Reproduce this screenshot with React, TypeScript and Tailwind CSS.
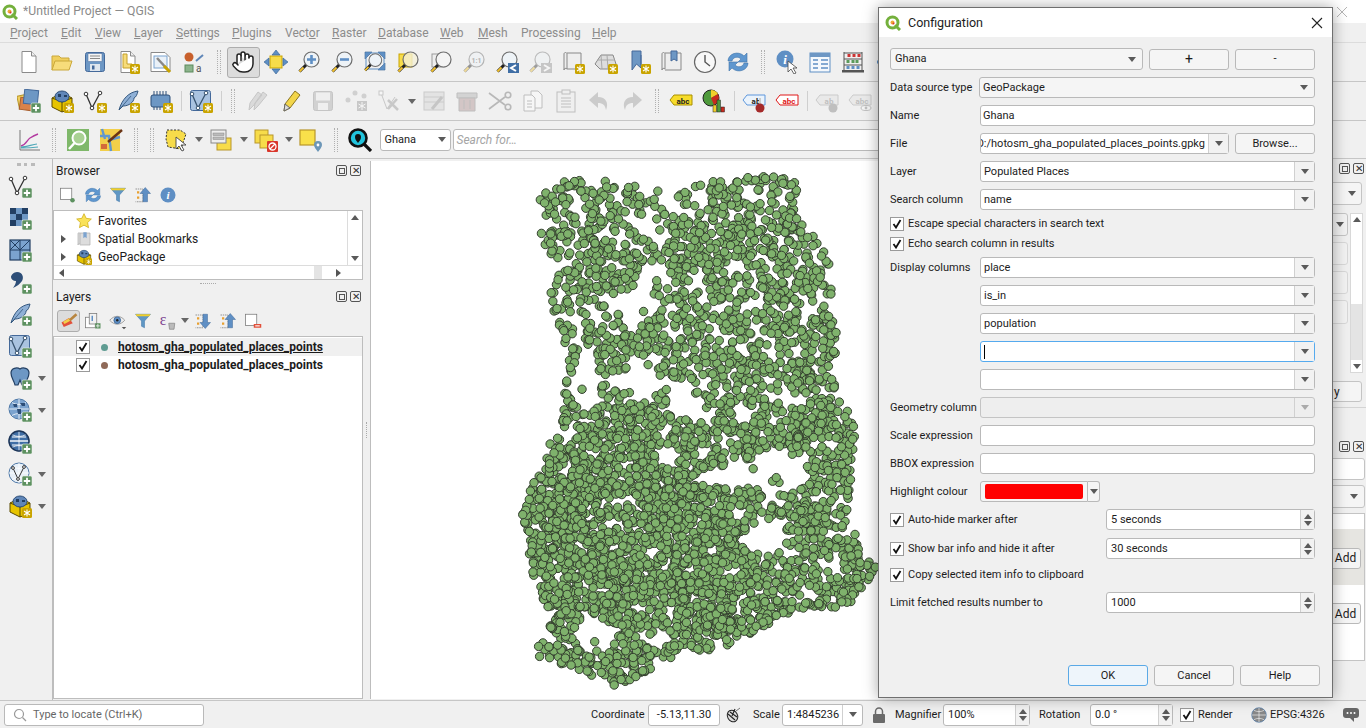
import { Hand } from "lucide-react";
import type { ReactNode } from "react";

//== helpers ==//
const Svg = ({ children, s = 24, className = "" }: { children: ReactNode; s?: number; className?: string }) => (
  <svg width={s} height={s} viewBox="0 0 24 24" className={className}>
    {children}
  </svg>
);

const Star = () => (
  <g>
    <rect x="14" y="14" width="10" height="10" rx="1.5" fill="#c9a400" />
    <path d="M19 15.5v7M16 17l6 4M22 17l-6 4" stroke="#fff" strokeWidth="1.1" />
  </g>
);

const PlusBadge = () => (
  <g>
    <rect x="14" y="14" width="10" height="10" rx="1.5" fill="#5d9160" stroke="#e8f0e8" strokeWidth=".6" />
    <path d="M19 15.8v6.4M15.8 19h6.4" stroke="#fff" strokeWidth="1.8" />
  </g>
);

const Glass = ({ fill = "#eef3f7", children }: { fill?: string; children?: ReactNode }) => (
  <>
    <circle cx="14.5" cy="9.5" r="7.5" fill={fill} stroke="#6e6e6e" strokeWidth="1.2" />
    {children}
    <path d="M9 15l-6.5 6.5" stroke="#222" strokeWidth="3" />
    <path d="M6.5 17.5l-4 4" stroke="#f2c230" strokeWidth="2" />
  </>
);

const DocIcon = ({ children }: { children?: ReactNode }) => (
  <>
    <path d="M5 1.5h9.5l4.5 4.5v16.5H5z" fill="#fff" stroke="#8a8a8a" />
    <path d="M14.5 1.5V6H19" fill="#eee" stroke="#8a8a8a" />
    {children}
  </>
);

const VShape = ({ c = "#333" }: { c?: string }) => (
  <>
    <path d="M3 5l6 14 8-15" fill="none" stroke={c} strokeWidth="1.3" />
    <circle cx="3" cy="5" r="1.8" fill="#fff" stroke={c} />
    <circle cx="9" cy="19" r="1.8" fill="#fff" stroke={c} />
    <circle cx="17" cy="4" r="1.8" fill="#fff" stroke={c} />
  </>
);

const Feather = () => (
  <>
    <path d="M3 21C6 10 13 3 22 2c-1 4-2 6-4 7 0 4-5 8-11 8z" fill="#8fb0d6" stroke="#35587f" />
    <path d="M3 21l12-14" stroke="#35587f" strokeWidth=".8" />
  </>
);

const GeoBox = () => (
  <>
    <path d="M12 4l10 5v10l-10 4-10-5V9z" fill="#e7c400" stroke="#5b4a00" />
    <path d="M2 9l10 4 10-4M12 13v10" fill="none" stroke="#5b4a00" />
    <ellipse cx="12" cy="7.5" rx="7" ry="5.5" fill="#5f86b8" stroke="#2d4e78" />
    <path d="M8 5h3v3H8zM14 6h3v2h-3z" fill="#223f63" />
  </>
);

const Globe = ({ c = "#7ba3cf" }: { c?: string }) => (
  <>
    <ellipse cx="11" cy="11" rx="10" ry="10" fill={c} stroke="#4f79a8" />
    <path d="M1 11h20M11 1v20M4 4.5c4 2.5 10 2.5 14 0M4 17.5c4-2.5 10-2.5 14 0" fill="none" stroke="#fff" strokeWidth=".8" />
  </>
);

const Tag = ({ c, fg = "#222", stroke, label }: { c: string; fg?: string; stroke: string; label: string }) => (
  <>
    <path d="M1 11l4-5h18v10H5z" fill={c} stroke={stroke} strokeWidth="1" />
    <text x="14" y="14.5" textAnchor="middle" fontSize="8" fontWeight="700" fontFamily="Roboto" fill={fg}>
      {label}
    </text>
  </>
);

//== toolbar row contents ==//
const i = {
  doc: <DocIcon />,
  folder: (
    <>
      <path d="M2 20V6h7l2 2h8v3" fill="#f0cf5e" stroke="#caa83a" />
      <path d="M2 20l3-9h17l-3 9z" fill="#f7dc7a" stroke="#caa83a" />
    </>
  ),
  save: (
    <>
      <rect x="2.5" y="2.5" width="19" height="19" rx="2" fill="#6d97c4" stroke="#44699a" />
      <rect x="5" y="3.5" width="14" height="8" fill="#f4f4f4" stroke="#44699a" strokeWidth=".5" />
      <path d="M7 6h10M7 8.5h10" stroke="#888" />
      <rect x="7" y="14" width="10" height="7" fill="#dfe6ee" />
      <rect x="9" y="15.5" width="2.5" height="4" fill="#44699a" />
    </>
  ),
  layout: (
    <>
      <DocIcon>
        <path d="M7 4h4v10h5v4H7z" fill="#f7dc7a" stroke="#c49f2a" />
      </DocIcon>
      <Star />
    </>
  ),
  layoutMgr: (
    <>
      <path d="M2 2.5h14l5 5v14H2z" fill="#fff" stroke="#8a8a8a" />
      <rect x="5" y="6" width="13" height="12" fill="#eaf1f8" stroke="#7ba3cf" />
      <path d="M8 8l12 13" stroke="#888" strokeWidth="2.5" />
      <path d="M15 16l6 6" stroke="#c9a400" strokeWidth="3" />
    </>
  ),
  style: (
    <>
      <circle cx="7" cy="7" r="4.5" fill="#c8602c" />
      <path d="M14 11l7-6" stroke="#5f86b8" strokeWidth="2" />
      <rect x="3" y="15" width="8" height="7" fill="#8cb48c" stroke="#5d8a5d" />
      <text x="14" y="22" fontSize="10" fontFamily="Roboto" fill="#555">a</text>
    </>
  ),
  pan: (
    <>
      <rect x="6" y="6" width="12" height="12" fill="#f7dc4a" stroke="#c9a400" />
      <path d="M12 0l4 5H8zM12 24l4-5H8zM0 12l5-4v8zM24 12l-5-4v8z" fill="#5f8fc4" stroke="#345f92" strokeWidth=".6" />
    </>
  ),
  zoomIn: (
    <Glass>
      <path d="M14.5 5v9M10 9.5h9" stroke="#5f8fc4" strokeWidth="2.6" />
    </Glass>
  ),
  zoomOut: (
    <Glass>
      <path d="M10 9.5h9" stroke="#5f8fc4" strokeWidth="2.6" />
    </Glass>
  ),
  zoomFull: (
    <>
      <path d="M2 2h7L2 9zM22 2h-7l7 7zM22 20h-7l7-7z" fill="#5f8fc4" stroke="#345f92" strokeWidth=".6" />
      <rect x="3" y="3" width="18" height="16" fill="none" stroke="#5f8fc4" />
      <g transform="translate(0 2) scale(.85)">
        <Glass />
      </g>
    </>
  ),
  zoomSel: (
    <>
      <rect x="3" y="4" width="13" height="13" fill="#f7dc4a" stroke="#c9a400" />
      <Glass fill="#f4f0d8cc" />
    </>
  ),
  zoomLayer: (
    <>
      <rect x="3" y="4" width="13" height="13" fill="#eee" stroke="#999" />
      <Glass fill="#f4f4f4" />
    </>
  ),
  zoomNative: (
    <g opacity=".45">
      <Glass>
        <text x="14.5" y="12.5" textAnchor="middle" fontSize="7" fontWeight="700" fontFamily="Roboto" fill="#666">1:1</text>
      </Glass>
    </g>
  ),
  zoomLast: (
    <>
      <Glass />
      <rect x="13" y="13" width="11" height="10" fill="#3f6ea5" />
      <path d="M21 15l-5 3 5 3" fill="none" stroke="#fff" strokeWidth="2" />
    </>
  ),
  zoomNext: (
    <g opacity=".4">
      <Glass />
      <rect x="13" y="13" width="11" height="10" fill="#888" />
      <path d="M16 15l5 3-5 3" fill="none" stroke="#fff" strokeWidth="2" />
    </g>
  ),
  mapView: (
    <>
      <path d="M3 4c0-2 3-2 3 0v15c-1-1-3-1-3 1zM6 3h14v16H6" fill="#eee" stroke="#888" />
      <Star />
    </>
  ),
  map3d: (
    <>
      <path d="M1 14l6-9h12l3 9-7 5H6z" fill="#ddd" stroke="#888" />
      <path d="M7 5l1 14M13 5l1 14M3 10h18" stroke="#aaa" fill="none" />
      <Star />
    </>
  ),
  bookmark: (
    <>
      <path d="M5 1h9v17l-4.5-4L5 20z" fill="#6d97c4" stroke="#44699a" />
      <path d="M14 5v10" stroke="#44699a" />
      <Star />
    </>
  ),
  showBook: (
    <>
      <path d="M2 4c0-2 3-2 3 0v15c-1-1-3-1-3 1zM5 3h16v17H5" fill="#eee" stroke="#888" />
      <path d="M11 1h6v10l-3-2-3 2z" fill="#6d97c4" stroke="#44699a" />
    </>
  ),
  clock: (
    <>
      <circle cx="12" cy="12" r="10.5" fill="#f8f8f8" stroke="#666" strokeWidth="1.2" />
      <path d="M12 5v7l5 4" fill="none" stroke="#555" strokeWidth="1.4" />
    </>
  ),
  refresh: (
    <>
      <path d="M2 11c0-7 10-11 16-5l3-3v9h-9l3-3c-3-3-8-2-9 2z" fill="#5f97cf" stroke="#3f74aa" strokeWidth=".6" />
      <path d="M22 13c0 7-10 11-16 5l-3 3v-9h9l-3 3c3 3 8 2 9-2z" fill="#5f97cf" stroke="#3f74aa" strokeWidth=".6" />
    </>
  ),
  identify: (
    <>
      <circle cx="10" cy="9" r="8.5" fill="#5f8fc4" />
      <text x="10" y="14" textAnchor="middle" fontSize="13" fontStyle="italic" fontWeight="700" fontFamily="Liberation Serif" fill="#fff">i</text>
      <path d="M13 11v11l3-3 3 5 2-1-3-5h4z" fill="#fff" stroke="#444" strokeWidth=".8" />
    </>
  ),
  attr: (
    <>
      <rect x="2" y="3" width="20" height="19" fill="#f4f8fc" stroke="#5f8fc4" />
      <rect x="2" y="3" width="20" height="4" fill="#6d97c4" />
      <path d="M5 10h5M13 10h7M5 14h5M13 14h7M5 18h5M13 18h7" stroke="#5f8fc4" strokeWidth="1.3" />
    </>
  ),
  abacus: (
    <>
      <path d="M3 2v19M21 2v19M3 3h18M3 9h18M3 15h18" stroke="#555" fill="none" />
      <rect x="1" y="20" width="22" height="2.5" fill="#555" />
      <path d="M8 4v3M13 4v3M18 4v3" stroke="#c33" strokeWidth="3" />
      <path d="M7 10v3M12 10v3M16 10v3" stroke="#5b9a5b" strokeWidth="3" />
      <path d="M7 16v3M12 16v3M17 16v3" stroke="#5f8fc4" strokeWidth="3" />
    </>
  ),
  arrows: <path d="M12 3v18M3 12h18" stroke="#5f8fc4" strokeWidth="3" />,
  dsm: (
    <>
      <rect x="1" y="6" width="13" height="13" fill="#f0cf5e" stroke="#b8962a" transform="rotate(-12 7 12)" />
      <rect x="3" y="9" width="13" height="12" fill="#d9824a" stroke="#a85f2e" transform="rotate(8 9 15)" />
      <rect x="7" y="1" width="14" height="14" fill="#6d97c4" stroke="#44699a" transform="rotate(6 14 8)" />
      <PlusBadge />
    </>
  ),
  geo: (
    <>
      <GeoBox />
      <Star />
    </>
  ),
  vertex: (
    <>
      <VShape />
      <Star />
    </>
  ),
  feather: (
    <>
      <Feather />
      <Star />
    </>
  ),
  chip: (
    <>
      <rect x="2" y="6" width="19" height="12" rx="2" fill="#6d97c4" stroke="#2d4e78" />
      <path d="M5 2v4M8 2v4M11 2v4M14 2v4M17 2v4M5 18v3M8 18v3M11 18v3" stroke="#2d4e78" />
      <Star />
    </>
  ),
  mesh: (
    <>
      <rect x="1.5" y="1.5" width="20" height="20" rx="2" fill="#a9c3e0" stroke="#44699a" />
      <VShape c="#39546f" />
      <Star />
    </>
  ),
  pencils: (
    <g opacity=".4">
      <path d="M4 21l1-7 8-11 4 3-9 11zM9 21l1-7 8-11 4 3-9 11z" fill="#bbb" stroke="#888" />
    </g>
  ),
  pencil: (
    <>
      <path d="M6 22l1-7L17 2l5 4-10 13z" fill="#f2d54a" stroke="#8a7420" />
      <path d="M6 22l1-7 5 4z" fill="#ddd" stroke="#666" />
    </>
  ),
  saveEdit: (
    <g opacity=".35">
      <rect x="2.5" y="2.5" width="19" height="19" rx="2" fill="#999" stroke="#777" />
      <rect x="5" y="3.5" width="14" height="8" fill="#eee" />
      <rect x="7" y="14" width="10" height="7" fill="#eee" />
    </g>
  ),
  nodes: (
    <g opacity=".45">
      <circle cx="11" cy="4" r="2.5" fill="#aaa" />
      <circle cx="4" cy="11" r="2.5" fill="#aaa" />
      <circle cx="20" cy="7" r="2.5" fill="#aaa" />
      <rect x="13" y="12" width="10" height="10" fill="#999" />
      <path d="M18 13v8M14.5 15l7 4M21.5 15l-7 4" stroke="#fff" />
    </g>
  ),
  vertexTool: (
    <g opacity=".45">
      <path d="M4 4l6 16 8-12" fill="none" stroke="#999" />
      <rect x="2" y="2" width="4" height="4" fill="#fff" stroke="#999" />
      <path d="M11 11l10 10M20 10l-9 10" stroke="#999" strokeWidth="2.5" />
    </g>
  ),
  merge: (
    <g opacity=".35">
      <rect x="2" y="3" width="20" height="18" fill="#ccc" stroke="#888" />
      <path d="M2 8h20M2 13h20" stroke="#888" />
      <path d="M10 20l10-12" stroke="#777" strokeWidth="3" />
    </g>
  ),
  trash: (
    <g opacity=".4">
      <path d="M2 4h20v5H2z" fill="#aaa" stroke="#777" />
      <path d="M4 9h16v13H4z" fill="#a88" stroke="#777" />
      <path d="M9 11v9M15 11v9" stroke="#777" />
    </g>
  ),
  scissors: (
    <g opacity=".4" fill="none" stroke="#666" strokeWidth="1.6">
      <path d="M1 4l16 12M1 20L17 8" />
      <circle cx="20" cy="6" r="2.8" />
      <circle cx="20" cy="18" r="2.8" />
    </g>
  ),
  copy: (
    <g opacity=".4" fill="#fff" stroke="#777">
      <path d="M10 2h7l4 4v13H10z" />
      <path d="M3 6h8l3 3v13H3zM6 12h5M6 15h5M6 18h5" />
    </g>
  ),
  paste: (
    <g opacity=".4" fill="#eee" stroke="#777">
      <rect x="3" y="3" width="18" height="20" />
      <rect x="8" y="1" width="8" height="4" />
      <path d="M7 9h10M7 12h10M7 15h10M7 18h10" />
    </g>
  ),
  undo: (
    <g opacity=".35">
      <path d="M11 3L2 11l9 8v-5c5 0 7 2 8 7 3-7 0-13-8-13z" fill="#888" />
    </g>
  ),
  redo: (
    <g opacity=".35">
      <path d="M13 3l9 8-9 8v-5c-5 0-7 2-8 7-3-7 0-13 8-13z" fill="#888" />
    </g>
  ),
  abcY: <Tag c="#f7dc2a" stroke="#a88f00" label="abc" />,
  pieBar: (
    <>
      <circle cx="9" cy="9" r="8" fill="#4f9a3c" stroke="#222" />
      <path d="M9 9V1a8 8 0 0 1 7 4z" fill="#f2cf2a" />
      <path d="M9 9l7-4a8 8 0 0 1-4 11z" fill="#c82a1e" />
      <rect x="11" y="16" width="3.5" height="7" fill="#f2cf2a" stroke="#222" strokeWidth=".5" />
      <rect x="15" y="11" width="3.5" height="12" fill="#4f9a3c" stroke="#222" strokeWidth=".5" />
      <rect x="19" y="18" width="3.5" height="5" fill="#c82a1e" stroke="#222" strokeWidth=".5" />
    </>
  ),
  abPin: (
    <>
      <Tag c="#eaf3fc" stroke="#5f97dc" label="ab" />
      <rect x="17" y="9" width="2" height="9" fill="#ccc" />
      <circle cx="18" cy="19" r="4.5" fill="#a52a2a" />
    </>
  ),
  abcR: <Tag c="#fff" fg="#e01818" stroke="#e01818" label="abc" />,
  abDim: (
    <g opacity=".35">
      <Tag c="#ddd" stroke="#888" fg="#666" label="ab" />
      <circle cx="18" cy="19" r="4.5" fill="#666" />
    </g>
  ),
  abcDim: (
    <g opacity=".35">
      <Tag c="#ddd" stroke="#888" fg="#666" label="abc" />
      <ellipse cx="18" cy="19" rx="5" ry="2.5" fill="#fff" stroke="#666" />
      <circle cx="18" cy="19" r="1.4" fill="#666" />
    </g>
  ),
  chart: (
    <>
      <path d="M3 2v20h20" fill="none" stroke="#777" />
      <path d="M4 18c5-1 6-6 9-8 3-2 5-3 8-4" fill="none" stroke="#b33aa0" strokeWidth="1.4" />
      <path d="M4 19c5 0 10-2 16-3M4 20c6 0 10 0 17-1" fill="none" stroke="#4fa8b8" strokeWidth="1.2" />
    </>
  ),
  find: (
    <>
      <rect x="1" y="1" width="22" height="22" fill="#7fb86a" />
      <circle cx="13" cy="10" r="6.5" fill="#a9d193" stroke="#fff" strokeWidth="2" />
      <path d="M8.5 15L3 21" stroke="#fff" strokeWidth="2.5" />
    </>
  ),
  mapBrush: (
    <>
      <rect x="1" y="1" width="20" height="22" fill="#f2cf4a" />
      <path d="M1 8h9l2 15M3 1l3 10M10 12l11-3" stroke="#5f97cf" strokeWidth="2.4" fill="none" />
      <path d="M2 16h6v5H2z" fill="#d46a3a" />
      <path d="M9 14L23 2" stroke="#6a3414" strokeWidth="2.5" />
    </>
  ),
  select: (
    <>
      <path d="M3 2h13l6 4-2 6-3 9-13-2-2-8z" fill="#f7dc4a" stroke="#333" strokeDasharray="2 1.5" />
      <path d="M12 9v12l3-3 3 5 2-1-3-5h5z" fill="#fff" stroke="#444" strokeWidth=".9" />
    </>
  ),
  table: (
    <>
      <rect x="8" y="10" width="14" height="12" fill="#f7dc4a" stroke="#b8962a" />
      <rect x="2" y="2" width="15" height="13" fill="#eee" stroke="#888" />
      <rect x="4" y="5" width="11" height="2.5" fill="#bbb" stroke="#888" strokeWidth=".5" />
      <rect x="4" y="9" width="11" height="2.5" fill="#bbb" stroke="#888" strokeWidth=".5" />
    </>
  ),
  deselect: (
    <>
      <rect x="1" y="2" width="13" height="13" fill="#f7dc4a" stroke="#b8962a" />
      <rect x="6" y="7" width="13" height="13" fill="#f7dc4a" stroke="#b8962a" />
      <rect x="13" y="13" width="11" height="11" rx="1" fill="#d9362a" />
      <circle cx="18.5" cy="18.5" r="3.5" fill="none" stroke="#fff" strokeWidth="1.3" />
      <path d="M16 21l5-5" stroke="#fff" strokeWidth="1.3" />
    </>
  ),
  pointer: (
    <>
      <rect x="1" y="2" width="15" height="15" fill="#f9e04a" stroke="#b8962a" strokeWidth="1.2" />
      <path d="M19 24c-2-3-4-5-4-7a4 4 0 0 1 8 0c0 2-2 4-4 7z" fill="#6d97b8" />
      <circle cx="19" cy="17" r="1.4" fill="#fff" />
    </>
  ),
  locator: (
    <>
      <circle cx="10" cy="10" r="8.5" fill="#22c3dc" stroke="#111" strokeWidth="2.6" />
      <path d="M16 16l7 7" stroke="#111" strokeWidth="3.2" />
      <path d="M10 15c-1-2-3-3-3-6a3 3 0 0 1 6 0c0 3-2 4-3 6z" fill="#111" />
    </>
  ),
  newShape: (
    <>
      <rect x="2" y="3" width="15" height="15" fill="#fff" stroke="#777" />
      <circle cx="18" cy="19" r="3" fill="#5d9160" />
    </>
  ),
  filter: (
    <>
      <path d="M2 3h20l-8 9v9l-4-2v-7z" fill="#5f97c4" stroke="#3f74aa" strokeWidth=".7" />
      <path d="M2 3h20l-1.5 2.5h-17z" fill="#f2cf2a" />
    </>
  ),
  collapse: (
    <>
      <path d="M2 4h10v17H2" fill="none" stroke="#777" strokeDasharray="2 1" />
      <rect x="4" y="7" width="3" height="3" fill="#e8a030" />
      <rect x="4" y="14" width="3" height="3" fill="#e8a030" />
      <path d="M15 2l7 8h-4v11h-6V10H8z" fill="#5f8fc4" stroke="#345f92" strokeWidth=".6" />
    </>
  ),
  expand: (
    <>
      <path d="M2 4h10v17H2" fill="none" stroke="#777" strokeDasharray="2 1" />
      <rect x="4" y="7" width="3" height="3" fill="#e8a030" />
      <rect x="4" y="14" width="3" height="3" fill="#e8a030" />
      <path d="M15 22l7-8h-4V3h-6v11H8z" fill="#5f8fc4" stroke="#345f92" strokeWidth=".6" />
    </>
  ),
  info: (
    <>
      <circle cx="12" cy="12" r="10" fill="#5f8fc4" />
      <text x="12" y="17.5" textAnchor="middle" fontSize="15" fontStyle="italic" fontWeight="700" fontFamily="Liberation Serif" fill="#fff">i</text>
    </>
  ),
  paint: (
    <>
      <path d="M2 14l10-6 5 7-12 5z" fill="#e2503a" />
      <path d="M4 13l9-5 2 3-9 5z" fill="#f2cf4a" />
      <path d="M13 11L22 3" stroke="#b88540" strokeWidth="3.5" />
    </>
  ),
  addGroup: (
    <>
      <rect x="2" y="7" width="13" height="14" fill="#fff" stroke="#777" />
      <rect x="7" y="2" width="10" height="14" fill="#f2f2f2" stroke="#777" />
      <path d="M11 5v7" stroke="#5f8fc4" strokeWidth="2" />
      <rect x="15" y="15" width="7" height="7" fill="#5d9160" />
      <path d="M18.5 16v5M16 18.5h5" stroke="#fff" />
    </>
  ),
  eye: (
    <>
      <path d="M1 11c6-7 14-7 20 0-6 7-14 7-20 0z" fill="#eee" stroke="#888" />
      <circle cx="11" cy="11" r="4.5" fill="#5f8fc4" stroke="#345f92" />
      <circle cx="11" cy="11" r="1.6" fill="#222" />
      <path d="M17 20l3 3 3-3z" fill="#555" />
    </>
  ),
  expr: (
    <>
      <text x="1" y="17" fontSize="21" fontFamily="Liberation Serif" fill="#7d3f8f">ε</text>
      <path d="M13 15h8l-1 8h-6z" fill="#bbb" stroke="#888" />
    </>
  ),
  removeLayer: (
    <>
      <rect x="2" y="3" width="15" height="15" fill="#fff" stroke="#777" />
      <rect x="13" y="16" width="10" height="5" fill="#e2503a" />
      <path d="M15 18.5h6" stroke="#fff" strokeWidth="1.5" />
    </>
  ),
  star: <path d="M12 1l3.3 7 7.7 1-5.6 5.3 1.4 7.7-6.8-3.7L5.200 22l1.400-7.700L1 9l7.700-1z" fill="#f9e25a" stroke="#c9a400" />,
  bookTree: (
    <>
      <path d="M3 4c0-2 3-2 3 0v16c-1-1-3-1-3 1zM6 3h15v18H6" fill="#ddd" stroke="#aaa" />
      <path d="M11 2h5v9l-2.500-2-2.500 2z" fill="#7ba3cf" />
    </>
  ),
  checker: (
    <>
      <path d="M2 2h6v6H2zM8 8h6v6H8zM14 2h6v6h-6zM2 14h6v6H2z" fill="#223f63" />
      <path d="M8 2h6v6H8zM2 8h6v6H2zM14 8h6v6h-6zM8 14h6v6H8z" fill="#6d97c4" />
      <PlusBadge />
    </>
  ),
  meshAdd: (
    <>
      <rect x="2" y="2" width="20" height="20" fill="#7ba3cf" stroke="#223f63" strokeWidth="1.2" />
      <path d="M2 2l10 10M12 2L2 12M12 2v20M2 12h20M22 2L12 12" stroke="#223f63" />
      <PlusBadge />
    </>
  ),
  comma: (
    <>
      <path d="M9 2c6 0 7 6 5 9-2 3-5 5-9 7 2-3 3-5 3-7-3 0-5-2-5-4s3-5 6-5z" fill="#2d4e78" />
      <PlusBadge />
    </>
  ),
  featherAdd: (
    <>
      <Feather />
      <PlusBadge />
    </>
  ),
  meshVAdd: (
    <>
      <rect x="1.500" y="1.500" width="20" height="20" rx="2" fill="#a9c3e0" stroke="#44699a" />
      <VShape c="#39546f" />
      <PlusBadge />
    </>
  ),
  vAdd: (
    <>
      <VShape />
      <PlusBadge />
    </>
  ),
  pg: (
    <>
      <path d="M3 7c0-5 6-6 9-4 3-2 9-1 9 4 0 5-3 7-4 12h-3l-2-5-2 5H7C6 14 3 12 3 7z" fill="#6d97c4" stroke="#223f63" strokeWidth="1.200" />
      <PlusBadge />
    </>
  ),
  wms: (
    <>
      <Globe />
      <path d="M5 6h4v3H6zM12 5h5v3h-3zM9 11h4v5h-3z" fill="#2d4e78" />
      <PlusBadge />
    </>
  ),
  wcs: (
    <>
      <Globe c="#3f6ea5" />
      <path d="M1 11h20M4 7h14M4 15h14" stroke="#fff" strokeWidth="1.200" />
      <circle cx="11" cy="11" r="10" fill="none" stroke="#1d3557" strokeWidth="1.500" />
      <PlusBadge />
    </>
  ),
  wfs: (
    <>
      <Globe c="#e8f0f8" />
      <path d="M5 6l5 11 6-12" fill="none" stroke="#333" />
      <circle cx="5" cy="6" r="1.400" fill="#fff" stroke="#333" />
      <circle cx="10" cy="17" r="1.400" fill="#fff" stroke="#333" />
      <circle cx="16" cy="5" r="1.400" fill="#fff" stroke="#333" />
      <PlusBadge />
    </>
  ),
};

const Caret = ({ c = "#5a5a5a" }: { c?: string }) => (
  <svg width="8" height="5" viewBox="0 0 8 5" className="shrink-0">
    <path d="M0 0h8L4 5z" fill={c} />
  </svg>
);

const Grip = ({ className = "" }: { className?: string }) => (
  <div className={`flex h-[24px] w-[16px] shrink-0 justify-center gap-[2px] ${className}`}>
    <div className="h-full w-px border-l border-dotted border-[#b0b0b0]" />
    <div className="h-full w-px border-l border-dotted border-[#b0b0b0]" />
  </div>
);

const Tool = ({ children, s = 24 }: { children: ReactNode; s?: number }) => (
  <div className="flex w-[33px] shrink-0 items-center justify-center">
    <Svg s={s}>{children}</Svg>
  </div>
);

const Drop = () => (
  <div className="flex w-[12px] shrink-0 items-center justify-center">
    <Caret c="#666" />
  </div>
);

const Sep = () => (
  <div className="flex w-[7px] shrink-0 justify-center">
    <div className="h-[20px] w-px bg-[#cfcfcf]" />
  </div>
);

const DockButtons = () => (
  <div className="flex items-center gap-[3px]">
    <div className="flex h-[11px] w-[11px] items-center justify-center rounded-[2px] border border-[#555]">
      <div className="h-[6px] w-[6px] border border-[#555]" />
    </div>
    <div className="flex h-[11px] w-[11px] items-center justify-center rounded-[2px] border border-[#555] text-[10px] leading-none text-[#333]">
      ✕
    </div>
  </div>
);

const QLogo = ({ s = 16 }: { s?: number }) => (
  <svg width={s} height={s} viewBox="0 0 16 16">
    <circle cx="7.500" cy="7.500" r="5.500" fill="#fff" stroke="#74b03c" strokeWidth="3" />
    <path d="M10 10l5 5" stroke="#74b03c" strokeWidth="3" />
    <circle cx="7.500" cy="7.500" r="2" fill="#f0a93a" />
    <circle cx="8.500" cy="8.500" r="1" fill="#d9362a" />
  </svg>
);

const CheckBox = () => (
  <div className="flex h-[14px] w-[14px] shrink-0 items-center justify-center border border-[#9a9a9a] bg-white">
    <svg width="10" height="10" viewBox="0 0 10 10">
      <path d="M1.500 5l2.500 3.500L8.500 1" fill="none" stroke="#111" strokeWidth="1.800" />
    </svg>
  </div>
);

//== Ghana points ==//
const POLY: [number, number][] = [
  [110, 110], [160, 55], [300, 50], [480, 85], [495, 160], [530, 100], [570, 60], [690, 50], [810, 30], [890, 50],
  [880, 150], [940, 210], [990, 260], [990, 420], [1010, 520], [1000, 640], [1060, 760], [1060, 850], [1040, 1030],
  [1085, 1140], [1135, 1190], [1090, 1240], [1040, 1300], [900, 1305], [800, 1350], [660, 1420], [480, 1460],
  [360, 1535], [200, 1470], [90, 1440], [150, 1320], [100, 1220], [75, 1100], [60, 1035], [110, 900], [185, 740],
  [195, 640], [190, 550], [160, 450], [145, 360], [200, 300], [125, 250], [110, 180],
];

const HOLES: [number, number, number, number][] = [
  [225, 135, 25, 18], [310, 140, 22, 22], [350, 225, 35, 22], [450, 180, 45, 50], [300, 320, 10, 8],
  [460, 320, 55, 32], [410, 420, 65, 55], [255, 650, 45, 80], [370, 640, 60, 30], [450, 650, 30, 60],
  [540, 690, 45, 60], [610, 640, 25, 20], [720, 730, 35, 30], [830, 900, 90, 70], [790, 1100, 75, 50],
  [500, 860, 35, 35], [280, 1385, 65, 55], [460, 1390, 45, 30], [880, 1270, 30, 12], [1000, 1190, 20, 15],
  [660, 920, 70, 30], [720, 905, 60, 40], [615, 850, 18, 20], [710, 370, 22, 18], [700, 290, 25, 14],
  [590, 340, 25, 25], [600, 730, 40, 30], [470, 570, 25, 12], [950, 790, 12, 22], [130, 1370, 15, 20],
];

const inPoly = (x: number, y: number) => {
  let inside = false;
  for (let a = 0, b = POLY.length - 1; a < POLY.length; b = a++) {
    const [xa, ya] = POLY[a];
    const [xb, yb] = POLY[b];
    if (ya > y !== yb > y && x < ((xb - xa) * (y - ya)) / (yb - ya) + xa) inside = !inside;
  }
  return inside;
};

const makeDots = () => {
  let seed = 20417;
  const rnd = () => {
    seed = (seed + 0x6d2b79f5) | 0;
    let t = Math.imul(seed ^ (seed >>> 15), 1 | seed);
    t = (t + Math.imul(t ^ (t >>> 7), 61 | t)) ^ t;
    return ((t ^ (t >>> 14)) >>> 0) / 4294967296;
  };
  const gaps: [number, number, number][] = [];
  for (let n = 0; n < 130; n++) gaps.push([60 + rnd() * 1040, 50 + rnd() * 1450, 6 + rnd() * 12]);
  const dots: [number, number][] = [];
  let tries = 0;
  while (dots.length < 4300 && tries < 300000) {
    tries++;
    const x = 55 + rnd() * 1085;
    const y = 28 + rnd() * 1510;
    if (!inPoly(x, y)) continue;
    if (HOLES.some(([cx, cy, rx, ry]) => ((x - cx) / rx) ** 2 + ((y - cy) / ry) ** 2 < 1) && rnd() > 0.06) continue;
    if (gaps.some(([cx, cy, r]) => (x - cx) ** 2 + (y - cy) ** 2 < r * r)) continue;
    const keep = y < 700 ? 0.55 : y > 850 && y < 1300 && x < 760 ? 1 : 0.72;
    if (rnd() > keep) continue;
    dots.push([x, y]);
  }
  for (const [cx, cy, k] of [[152, 1128, 8], [150, 1358, 10], [650, 1330, 50], [1002, 555, 5], [890, 800, 10]]) {
    for (let n = 0; n < k; n++) dots.push([cx + (rnd() - 0.5) * (k > 20 ? 90 : 8), cy + (rnd() - 0.5) * (k > 20 ? 70 : 8)]);
  }
  // 크롭 좌표 -> 지도 좌표 (세로는 조금 더 늘어남)
  return dots.map(([x, y]) => [500 + x / 3 - 370, 172 + ((y - 28) / 3) * 1.027 - 161]);
};
const DOTS = makeDots();

//== menu ==//
const MENU = [
  { pre: "", key: "P", post: "roject", w: "w-[51px]" },
  { pre: "", key: "E", post: "dit", w: "w-[34px]" },
  { pre: "", key: "V", post: "iew", w: "w-[39px]" },
  { pre: "", key: "L", post: "ayer", w: "w-[42px]" },
  { pre: "", key: "S", post: "ettings", w: "w-[56px]" },
  { pre: "", key: "P", post: "lugins", w: "w-[53px]" },
  { pre: "Vect", key: "o", post: "r", w: "w-[47px]" },
  { pre: "", key: "R", post: "aster", w: "w-[46px]" },
  { pre: "", key: "D", post: "atabase", w: "w-[62px]" },
  { pre: "", key: "W", post: "eb", w: "w-[38px]" },
  { pre: "", key: "M", post: "esh", w: "w-[43px]" },
  { pre: "Pro", key: "c", post: "essing", w: "w-[71px]" },
  { pre: "", key: "H", post: "elp", w: "w-[40px]" },
];

//== dialog controls ==//
const Combo = ({ value, className = "" }: { value?: ReactNode; className?: string }) => (
  <div className={`flex h-[21px] items-center rounded-[3px] border border-[#b9b9b9] bg-white ${className}`}>
    <div className="min-w-0 flex-1 truncate pl-[3px]">{value}</div>
    <div className="flex h-full w-[20px] items-center justify-center border-l border-[#d0d0d0] bg-[#f2f2f2]">
      <Caret />
    </div>
  </div>
);

const Button = ({ children, className = "" }: { children: ReactNode; className?: string }) => (
  <div className={`flex h-[21px] items-center justify-center rounded-[3px] border border-[#b9b9b9] bg-[#f5f5f5] ${className}`}>
    {children}
  </div>
);

const Input = ({ children }: { children?: ReactNode }) => (
  <div className="flex h-[21px] w-[335px] items-center rounded-[3px] border border-[#b9b9b9] bg-white pl-[2px]">{children}</div>
);

const Spin = ({ value, className = "" }: { value: string; className?: string }) => (
  <div className={`flex h-[21px] items-center rounded-[3px] border border-[#b9b9b9] bg-white ${className}`}>
    <div className="flex-1 truncate pl-[4px]">{value}</div>
    <div className="flex h-full w-[14px] flex-col items-center justify-center gap-[2px] border-l border-[#d0d0d0] bg-[#f2f2f2]">
      <svg width="8" height="5" viewBox="0 0 8 5">
        <path d="M0 5h8L4 0z" fill="#5a5a5a" />
      </svg>
      <Caret />
    </div>
  </div>
);

const Row = ({ label, children, mt = "mt-[7px]" }: { label: string; children: ReactNode; mt?: string }) => (
  <div className={`flex h-[21px] items-center ${mt}`}>
    <div className="w-[90px] shrink-0 whitespace-nowrap">{label}</div>
    {children}
  </div>
);

const Check = ({ label, mt }: { label: string; mt: string }) => (
  <div className={`flex h-[14px] items-center gap-[4px] ${mt}`}>
    <CheckBox />
    <span className="whitespace-nowrap">{label}</span>
  </div>
);

const Dialog = () => (
  <div className="absolute left-[878px] top-[7px] flex h-[691px] w-[455px] flex-col border border-[#6f6f6f] bg-[#f0f0f0] text-[11px] leading-[18px] text-[#1c1c1c] shadow-[0_0_14px_rgba(0,0,0,0.35)]">
    <div className="flex h-[29px] shrink-0 items-center bg-white pl-[6px] pr-[9px]">
      <QLogo />
      <span className="ml-[7px] flex-1 text-[12.500px]">Configuration</span>
      <svg width="12" height="12" viewBox="0 0 12 12">
        <path d="M1 1l10 10M11 1L1 11" stroke="#222" strokeWidth="1.100" />
      </svg>
    </div>
    <div className="flex flex-1 flex-col pl-[11px] pr-[17px]">
      <div className="mt-[11px] flex h-[22px] items-center">
        <div className="flex h-full w-[253px] items-center justify-between rounded-[3px] border border-[#b9b9b9] bg-[#f5f5f5] pl-[4px] pr-[6px]">
          Ghana
          <Caret />
        </div>
        <Button className="ml-[6px] w-[80px] text-[14px]">+</Button>
        <Button className="ml-[6px] w-[80px]">-</Button>
      </div>
      <Row label="Data source type">
        <div className="-ml-px flex h-full w-[336px] items-center justify-between rounded-[3px] border border-[#b9b9b9] bg-[#f5f5f5] pl-[3px] pr-[6px]">
          GeoPackage
          <Caret />
        </div>
      </Row>
      <Row label="Name">
        <Input>Ghana</Input>
      </Row>
      <Row label="File">
        <div className="flex h-[21px] w-[249px] items-center rounded-[3px] border border-[#b9b9b9] bg-white">
          <div className="flex min-w-0 flex-1 justify-end overflow-hidden whitespace-nowrap pr-[3px]">
            D:/hotosm_gha_populated_places_points.gpkg
          </div>
          <div className="flex h-full w-[20px] shrink-0 items-center justify-center border-l border-[#d0d0d0] bg-[#f2f2f2]">
            <Caret />
          </div>
        </div>
        <Button className="ml-[6px] w-[80px]">Browse...</Button>
      </Row>
      <Row label="Layer">
        <Combo value="Populated Places" className="w-[335px]" />
      </Row>
      <Row label="Search column">
        <Combo value="name" className="w-[335px]" />
      </Row>
      <Check label="Escape special characters in search text" mt="mt-[7px]" />
      <Check label="Echo search column in results" mt="mt-[6px]" />
      <Row label="Display columns" mt="mt-[6px]">
        <Combo value="place" className="w-[335px]" />
      </Row>
      <Row label="">
        <Combo value="is_in" className="w-[335px]" />
      </Row>
      <Row label="">
        <Combo value="population" className="w-[335px]" />
      </Row>
      <Row label="">
        <Combo value={<div className="h-[14px] w-px bg-black" />} className="w-[335px] !border-[#55aaee]" />
      </Row>
      <Row label="">
        <Combo className="w-[335px]" />
      </Row>
      <Row label="Geometry column">
        <div className="flex h-full w-[335px] items-center justify-end rounded-[3px] border border-[#c4c4c4] bg-[#eeeeee]">
          <div className="flex h-full w-[20px] items-center justify-center border-l border-[#d0d0d0]">
            <Caret c="#aaa" />
          </div>
        </div>
      </Row>
      <Row label="Scale expression">
        <Input />
      </Row>
      <Row label="BBOX expression">
        <Input />
      </Row>
      <Row label="Highlight colour">
        <div className="flex h-full w-[108px] items-center justify-center rounded-l-[3px] border border-[#b9b9b9] bg-[#f5f5f5]">
          <div className="h-[15px] w-[98px] rounded-[2px] bg-[#ff0000]" />
        </div>
        <div className="flex h-full w-[12px] items-center justify-center rounded-r-[3px] border border-l-0 border-[#b9b9b9] bg-[#f5f5f5]">
          <Caret />
        </div>
      </Row>
      <div className="mt-[7px] flex h-[21px] items-center justify-between">
        <Check label="Auto-hide marker after" mt="" />
        <Spin value="5 seconds" className="w-[209px]" />
      </div>
      <div className="mt-[8px] flex h-[21px] items-center justify-between">
        <Check label="Show bar info and hide it after" mt="" />
        <Spin value="30 seconds" className="w-[209px]" />
      </div>
      <Check label="Copy selected item info to clipboard" mt="mt-[9px]" />
      <div className="mt-[10px] flex h-[21px] items-center justify-between">
        <span className="whitespace-nowrap">Limit fetched results number to</span>
        <Spin value="1000" className="w-[209px]" />
      </div>
      <div className="-mr-[5px] mb-[11px] mt-auto flex justify-end gap-[6px]">
        <Button className="w-[80px] !border-[#5aa9e6] !bg-[#eef5fb]">OK</Button>
        <Button className="w-[80px]">Cancel</Button>
        <Button className="w-[80px]">Help</Button>
      </div>
    </div>
  </div>
);

//== behind the dialog on the right ==//
const RightDock = () => (
  <div className="flex h-full w-[33px] shrink-0 flex-col overflow-hidden text-[12px]">
    <div className="mt-[4px] flex h-[11px] justify-end pr-[2px]">
      <DockButtons />
    </div>
    <div className="ml-[-10px] mr-[4px] mt-[8px] flex h-[23px] items-center justify-end rounded-[3px] border border-[#c4c4c4] bg-[#f5f5f5] pr-[5px]">
      <Caret />
    </div>
    <div className="mt-[8px] flex h-[160px] gap-[2px] pr-[3px]">
      <div className="-ml-[10px] flex flex-1 flex-col gap-[6px]">
        <div className="flex h-[23px] shrink-0 items-center justify-end rounded-[3px] border border-[#c4c4c4] bg-[#f2f2f2] pr-[3px]">
          <Caret />
        </div>
        <div className="h-[23px] shrink-0 rounded-[3px] border border-[#d8d8d8] bg-[#f2f2f2]" />
        <div className="h-[23px] shrink-0 rounded-[3px] border border-[#d8d8d8] bg-[#f2f2f2]" />
        <div className="h-[24px] shrink-0 rounded-[3px] border border-[#d8d8d8] bg-[#f2f2f2]" />
      </div>
      <div className="flex w-[13px] flex-col items-center border border-[#d8d8d8] bg-white">
        <div className="flex h-[12px] items-center">
          <svg width="8" height="5" viewBox="0 0 8 5">
            <path d="M0 5h8L4 0z" fill="#5a5a5a" />
          </svg>
        </div>
        <div className="mt-[78px] h-[57px] w-full bg-[#e4e4e4]" />
        <div className="flex h-[12px] items-center">
          <Caret />
        </div>
      </div>
    </div>
    <div className="ml-[-10px] mr-[4px] mt-[8px] flex h-[21px] items-center justify-start rounded-[3px] border border-[#c4c4c4] bg-[#f5f5f5] pl-[10px]">
      y
    </div>
    <div className="mt-[5px] h-px bg-[#d4d4d4]" />
    <div className="mt-[33px] flex h-[11px] justify-end pr-[2px]">
      <DockButtons />
    </div>
    <div className="ml-[-10px] mr-[1px] mt-[6px] h-[22px] shrink-0 rounded-[3px] border border-[#c4c4c4] bg-white" />
    <div className="ml-[-10px] mr-[1px] mt-[5px] flex h-[23px] shrink-0 items-center justify-end rounded-[3px] border border-[#c4c4c4] bg-[#f5f5f5] pr-[6px]">
      <Caret />
    </div>
    <div className="mr-[1px] mt-[5px] flex h-[148px] shrink-0 flex-col border-y border-r border-[#c4c4c4] bg-white">
      <div className="mt-[15px] flex h-[56px] items-center bg-[#e6e5e1] pt-[2px]">
        <div className="-ml-[3px] flex h-[21px] w-[31px] items-center justify-center rounded-[3px] border border-[#b9b9b9] bg-[#f5f5f5]">
          Add
        </div>
      </div>
      <div className="mt-[18px] flex h-[21px]">
        <div className="-ml-[3px] flex h-[21px] w-[31px] items-center justify-center rounded-[3px] border border-[#b9b9b9] bg-[#f5f5f5]">
          Add
        </div>
      </div>
    </div>
  </div>
);

const App = () => {
  return (
    <div className="relative flex h-[728px] w-[1366px] flex-col overflow-hidden bg-[#f0f0f0] text-[12px] text-[#1c1c1c] [font-family:Roboto,sans-serif]">
      {/* title */}
      <div className="flex h-[23px] shrink-0 items-center bg-white pl-[2px] pr-[19px] text-[12.200px] text-[#8a8a8a]">
        <QLogo />
        <span className="ml-[5px] flex-1">*Untitled Project — QGIS</span>
        <svg width="10" height="10" viewBox="0 0 10 10">
          <path d="M0 0l10 10M10 0L0 10" stroke="#b5b5b5" />
        </svg>
      </div>

      {/* menu */}
      <div className="flex h-[20px] shrink-0 items-center border-b border-[#dcdcdc] pl-[10px] text-[#8c8c8c]">
        {MENU.map((m) => (
          <span key={m.pre + m.key + m.post} className={`${m.w} shrink-0`}>
            {m.pre}
            <span className="underline">{m.key}</span>
            {m.post}
          </span>
        ))}
      </div>

      {/* toolbars */}
      <div className="flex h-[39px] shrink-0 items-center border-b border-[#c6c6c6] pl-[12.500px]">
        {[i.doc, i.folder, i.save, i.layout, i.layoutMgr, i.style].map((n, k) => (
          <Tool key={k}>{n}</Tool>
        ))}
        <Grip />
        <div className="flex h-[31px] w-[33px] shrink-0 items-center justify-center rounded-[3px] border border-[#adadad] bg-[#dcdcdc]">
          <Hand size={24} fill="#fff" stroke="#222" strokeWidth={1.5} />
        </div>
        {[i.pan, i.zoomIn, i.zoomOut, i.zoomFull, i.zoomSel, i.zoomLayer, i.zoomNative, i.zoomLast, i.zoomNext, i.mapView, i.map3d, i.bookmark, i.showBook, i.clock, i.refresh].map((n, k) => (
          <Tool key={k}>{n}</Tool>
        ))}
        <Grip />
        {[i.identify, i.attr, i.abacus, i.arrows].map((n, k) => (
          <Tool key={k}>{n}</Tool>
        ))}
      </div>

      <div className="flex h-[39px] shrink-0 items-center border-b border-[#c6c6c6] pl-[12.500px]">
        {[i.dsm, i.geo, i.vertex, i.feather, i.chip].map((n, k) => (
          <Tool key={k}>{n}</Tool>
        ))}
        <Sep />
        <Tool>{i.mesh}</Tool>
        <Sep />
        <Grip />
        {[i.pencils, i.pencil, i.saveEdit, i.nodes, i.vertexTool].map((n, k) => (
          <Tool key={k}>{n}</Tool>
        ))}
        <Drop />
        {[i.merge, i.trash, i.scissors, i.copy, i.paste, i.undo, i.redo].map((n, k) => (
          <Tool key={k}>{n}</Tool>
        ))}
        <Grip />
        <Tool>{i.abcY}</Tool>
        <Tool>{i.pieBar}</Tool>
        <Sep />
        <Tool>{i.abPin}</Tool>
        <Tool>{i.abcR}</Tool>
        <Sep />
        <Tool>{i.abDim}</Tool>
        <Tool>{i.abcDim}</Tool>
      </div>

      <div className="flex h-[38px] shrink-0 items-center border-b border-[#c6c6c6] pl-[12.500px] pr-[40px]">
        <Tool>{i.chart}</Tool>
        <Grip />
        <Tool>{i.find}</Tool>
        <Tool>{i.mapBrush}</Tool>
        <Grip />
        <Grip />
        <Tool>{i.select}</Tool>
        <Drop />
        <Tool>{i.table}</Tool>
        <Drop />
        <Tool>{i.deselect}</Tool>
        <Drop />
        <Tool>{i.pointer}</Tool>
        <Grip />
        <Tool>{i.locator}</Tool>
        <div className="ml-[3px] flex h-[22px] w-[71px] shrink-0 items-center justify-between rounded-[3px] border border-[#b9b9b9] bg-white pl-[4px] pr-[4px] text-[11px] leading-[18px]">
          Ghana
          <Caret />
        </div>
        <div className="ml-[2px] flex h-[22px] flex-1 items-center rounded-[3px] border border-[#b9b9b9] bg-white pl-[3px] italic text-[#a5a5a5]">
          Search for…
        </div>
      </div>

      {/* body */}
      <div className="flex min-h-0 flex-1">
        <div className="flex w-[53px] shrink-0 flex-col border-r border-[#bdbdbd]">
          <div className="mx-auto h-[11px] w-[18px] pt-[4px]">
            <div className="border-t-[3px] border-dotted border-[#bbb]" />
          </div>
          {[
            [i.vAdd, false], [i.checker, false], [i.meshAdd, false], [i.comma, false], [i.featherAdd, false], [i.meshVAdd, false],
            [i.pg, true], [i.wms, true], [i.wcs, false], [i.wfs, true], [i.geo, true],
          ].map(([n, drop], k) => (
            <div key={k} className="flex h-[32px] shrink-0 items-center pl-[8px]">
              <Svg>{n as ReactNode}</Svg>
              {drop ? (
                <div className="ml-[6px]">
                  <Caret c="#666" />
                </div>
              ) : null}
            </div>
          ))}
        </div>

        <div className="flex w-[310px] shrink-0 flex-col pb-px pt-[2px]">
          <div className="flex h-[19px] shrink-0 items-center justify-between pl-[3px] pr-[2px]">
            Browser
            <DockButtons />
          </div>
          <div className="flex h-[29px] shrink-0 items-center pl-[2px]">
            {[i.newShape, i.refresh, i.filter, i.collapse, i.info].map((n, k) => (
              <div key={k} className="flex w-[25px] justify-center">
                <Svg s={18}>{n}</Svg>
              </div>
            ))}
          </div>
          <div className="mt-px flex h-[70px] shrink-0 flex-col border border-[#bdbdbd] bg-white">
            <div className="flex min-h-0 flex-1">
              <div className="flex-1 pt-px">
                {[
                  { n: i.star, t: "Favorites", a: false },
                  { n: i.bookTree, t: "Spatial Bookmarks", a: true },
                  { n: i.geo, t: "GeoPackage", a: true },
                ].map((r) => (
                  <div key={r.t} className="flex h-[18px] items-center">
                    <div className="flex w-[22px] justify-start pl-[7px]">
                      {r.a ? (
                        <svg width="5" height="8" viewBox="0 0 5 8">
                          <path d="M0 0l5 4-5 4z" fill="#555" />
                        </svg>
                      ) : null}
                    </div>
                    <Svg s={16}>{r.n}</Svg>
                    <span className="ml-[6px]">{r.t}</span>
                  </div>
                ))}
              </div>
              <div className="flex w-[15px] flex-col items-center justify-between border-l border-[#dcdcdc] py-[4px]">
                <svg width="8" height="5" viewBox="0 0 8 5">
                  <path d="M0 5h8L4 0z" fill="#5a5a5a" />
                </svg>
                <Caret />
              </div>
            </div>
            <div className="flex h-[14px] shrink-0 items-center justify-between border-t border-[#dcdcdc] px-[5px]">
              <svg width="5" height="8" viewBox="0 0 5 8">
                <path d="M5 0L0 4l5 4z" fill="#555" />
              </svg>
              <div className="ml-auto mr-[14px] h-[13px] w-[8px] bg-[#e4e4e4]" />
              <svg width="5" height="8" viewBox="0 0 5 8" className="mr-[16px]">
                <path d="M0 0l5 4-5 4z" fill="#555" />
              </svg>
            </div>
          </div>
          <div className="flex h-[7px] shrink-0 items-center justify-center">
            <div className="w-[16px] border-t border-dotted border-[#aaa]" />
          </div>
          <div className="flex h-[19px] shrink-0 items-center justify-between pl-[3px] pr-[2px]">
            Layers
            <DockButtons />
          </div>
          <div className="flex h-[29px] shrink-0 items-center pl-[4px]">
            <div className="flex h-[22px] w-[23px] items-center justify-center rounded-[3px] border border-[#adadad] bg-[#dcdcdc]">
              <Svg s={18}>{i.paint}</Svg>
            </div>
            {[i.addGroup, i.eye, i.filter, i.expr].map((n, k) => (
              <div key={k} className="flex w-[25px] justify-center">
                <Svg s={18}>{n}</Svg>
              </div>
            ))}
            <div className="flex w-[10px] justify-center">
              <Caret c="#666" />
            </div>
            {[i.expand, i.collapse, i.removeLayer].map((n, k) => (
              <div key={k} className="flex w-[25px] justify-center">
                <Svg s={18}>{n}</Svg>
              </div>
            ))}
          </div>
          <div className="mt-px flex min-h-0 flex-1 flex-col border border-[#bdbdbd] bg-white pt-[1px] font-bold">
            <div className="flex h-[18px] items-center bg-[#f0f0f0] pl-[22px]">
              <CheckBox />
              <div className="ml-[11px] h-[7px] w-[7px] rounded-full bg-[#5f9c92]" />
              <span className="ml-[10px] underline">hotosm_gha_populated_places_points</span>
            </div>
            <div className="flex h-[18px] items-center pl-[22px]">
              <CheckBox />
              <div className="ml-[11px] h-[7px] w-[7px] rounded-full bg-[#8f6a58]" />
              <span className="ml-[10px]">hotosm_gha_populated_places_points</span>
            </div>
          </div>
        </div>

        <div className="flex w-[7px] shrink-0 items-center justify-center">
          <div className="h-[16px] border-l border-dotted border-[#aaa]" />
        </div>

        <div className="mb-px mt-[2px] min-w-0 flex-1 border-l border-[#bdbdbd] bg-white">
          <svg width="963" height="538" viewBox="0 0 963 538">
            {DOTS.map(([x, y], k) => (
              <circle key={k} cx={x} cy={y} r="4.2" fill="#7fb26c" stroke="#333d2e" strokeWidth="1" />
            ))}
          </svg>
        </div>

        <RightDock />
      </div>

      {/* status bar */}
      <div className="flex h-[28px] shrink-0 items-center border-t border-[#c6c6c6] pl-[4px] pr-[7px] text-[11px] leading-[18px]">
        <div className="flex h-[22px] w-[200px] items-center rounded-[3px] border border-[#b9b9b9] bg-white pl-[8px] text-[#666]">
          <svg width="14" height="14" viewBox="0 0 14 14">
            <circle cx="6" cy="6" r="4.500" fill="none" stroke="#999" strokeWidth="1.200" />
            <path d="M9.500 9.500L13 13" stroke="#999" strokeWidth="1.200" />
          </svg>
          <span className="ml-[6px]">Type to locate (Ctrl+K)</span>
        </div>
        <div className="flex-1" />
        <span className="w-[57px] shrink-0">Coordinate</span>
        <div className="flex h-[22px] w-[72px] shrink-0 items-center justify-center rounded-[3px] border border-[#b9b9b9] bg-white">-5.13,11.30</div>
        <div className="flex w-[26px] shrink-0 justify-center">
          <svg width="16" height="16" viewBox="0 0 16 16">
            <ellipse cx="7.500" cy="9" rx="5" ry="6" fill="#ddd" stroke="#222" transform="rotate(-30 7.500 9)" />
            <path d="M3 7l7 6M5 5l7 5M7 9l3-7" stroke="#222" strokeWidth="1.100" />
            <path d="M11 4l4-3" stroke="#777" />
          </svg>
        </div>
        <span className="ml-[7px] w-[29px] shrink-0">Scale</span>
        <div className="flex h-[22px] w-[81px] shrink-0 items-center rounded-[3px] border border-[#b9b9b9] bg-white pl-[4px]">
          <span className="flex-1">1:4845236</span>
          <div className="flex h-full w-[20px] items-center justify-center border-l border-[#d0d0d0]">
            <Caret />
          </div>
        </div>
        <div className="flex w-[32px] shrink-0 justify-center">
          <svg width="14" height="16" viewBox="0 0 14 16">
            <rect x="1" y="7" width="12" height="9" rx="1" fill="#6a6a6a" />
            <path d="M3.500 7V4.500a3.500 3.500 0 0 1 7 0V7" fill="none" stroke="#6a6a6a" strokeWidth="1.500" />
          </svg>
        </div>
        <span className="w-[48px] shrink-0">Magnifier</span>
        <Spin value="100%" className="h-[22px] w-[87px] shrink-0" />
        <span className="ml-[9px] w-[51px] shrink-0">Rotation</span>
        <Spin value="0.0 °" className="h-[22px] w-[83px] shrink-0" />
        <div className="ml-[7px]">
          <CheckBox />
        </div>
        <span className="ml-[4px] w-[40px] shrink-0">Render</span>
        <div className="ml-[13px] shrink-0">
          <svg width="16" height="16" viewBox="0 0 22 22">
            <Globe c="#888" />
          </svg>
        </div>
        <span className="ml-[3px] w-[60px] shrink-0">EPSG:4326</span>
        <div className="ml-[13px] shrink-0">
          <svg width="16" height="15" viewBox="0 0 16 15">
            <path d="M3 1h10a3 3 0 0 1 3 3v4a3 3 0 0 1-3 3h-2v4l-4-4H3a3 3 0 0 1-3-3V4a3 3 0 0 1 3-3z" fill="#666" />
            <circle cx="4.500" cy="6" r="1" fill="#fff" />
            <circle cx="8" cy="6" r="1" fill="#fff" />
            <circle cx="11.500" cy="6" r="1" fill="#fff" />
          </svg>
        </div>
      </div>

      <Dialog />
    </div>
  );
};

export default App;
